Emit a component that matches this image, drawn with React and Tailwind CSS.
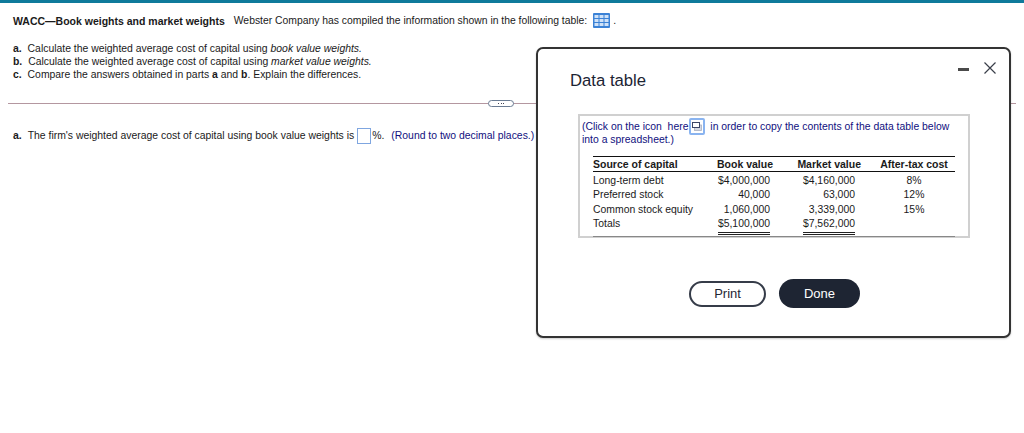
function GridIcon() {
  return (
    <svg width="17" height="15" viewBox="0 0 17 15" className="inline-block">
      <rect width="17" height="15" rx="1" fill="#3b82d6" />
      {[2, 6, 10].map((y) =>
        [1.5, 6.5, 11.5].map((x) => <rect key={x + "-" + y} x={x} y={y} width="4" height="3" fill="#cfe2f8" />)
      )}
    </svg>
  );
}

function CopyIcon() {
  return (
    <span className="inline-flex w-[16px] h-[17px] -my-[3px] border-2 border-[#8ab4f0] rounded-[2px] items-center justify-center align-middle bg-white">
      <svg width="10" height="9" viewBox="0 0 10 9">
        <rect x="2.5" y="3" width="7" height="5.5" fill="#d5d9e4" stroke="#a8aec0" strokeWidth="0.8" />
        <rect x="0.5" y="0.5" width="7" height="5" fill="white" stroke="#3c4668" strokeWidth="1" />
      </svg>
    </span>
  );
}

const rows = [
  ["Long-term debt", "$4,000,000", "$4,160,000", "8%"],
  ["Preferred stock", "40,000", "63,000", "12%"],
  ["Common stock equity", "1,060,000", "3,339,000", "15%"],
];

export default function App() {
  return (
    <div className="relative w-[1024px] h-[433px] bg-white overflow-hidden font-['Liberation_Sans',Arial,sans-serif] text-[10.42px] text-[#1a1a1a]">
      <div className="h-[3px] bg-[#0f7a9b]" />
      <div className="pl-[13px] pt-[7px] leading-[14px] flex items-center h-[22px] mt-[3px] text-[10.37px]">
        <b className="mr-[9px] text-[10.5px]">WACC—Book weights and market weights</b>
        <span>Webster Company has compiled the information shown in the following table:</span>
        <span className="ml-[6px] mr-[3px] flex"><GridIcon /></span>
        <span>.</span>
      </div>
      <div className="pl-[13px] mt-[14px] leading-[13px]">
        <div><b className="mr-[3px]">a.</b> Calculate the weighted average cost of capital using <i>book value weights.</i></div>
        <div><b className="mr-[3px]">b.</b> Calculate the weighted average cost of capital using <i>market value weights.</i></div>
        <div><b className="mr-[3px]">c.</b> Compare the answers obtained in parts <b>a</b> and <b>b</b>. Explain the differences.</div>
      </div>
      <div className="relative mx-[8px] mt-[22px] h-px bg-[#b497a0]">
        <div className="absolute left-[480px] top-[-3px] w-[26px] h-[7px] rounded-full border border-[#6b7c93] bg-white flex items-center justify-center gap-[1.5px]">
          <span className="w-px h-px bg-[#445]" />
          <span className="w-px h-px bg-[#445]" />
          <span className="w-px h-px bg-[#445]" />
        </div>
      </div>
      <div className="pl-[13px] mt-[24px] flex items-center h-[16px] whitespace-nowrap">
        <b className="mr-[6px]">a.</b>
        <span>The firm's weighted average cost of capital using book value weights is</span>
        <span className="ml-[3px] w-[14px] h-[16px] border border-[#7fa6e0] bg-white" />
        <span className="ml-px">%.</span>
        <span className="ml-[7px] text-[#10107e]">(Round to two decimal places.)</span>
      </div>

      <div className="absolute left-[536px] top-[47px] w-[475px] h-[291px] bg-white border-2 border-[#333] rounded-[7px] shadow-[0_1px_2px_rgba(0,0,0,0.2)]">
        <div className="absolute left-[420px] top-[13px] flex items-start gap-[15px]">
          <span className="w-[11px] h-[3px] bg-[#4a4a4a] mt-[6px]" />
          <svg width="12" height="12" viewBox="0 0 12 12" fill="none" stroke="#3a3f4a" strokeWidth="1.2">
            <path d="M0.5 0.5 L11.5 11.5 M11.5 0.5 L0.5 11.5" />
          </svg>
        </div>
        <div className="pl-[32px] pt-[22px] text-[16.7px] leading-[20px] text-[#1c2433]">Data table</div>
        <div className="ml-[40px] mt-[23px] w-[392px] h-[124px] border-2 border-[#d0d0d0] pl-[2px] pr-[13px] pt-[4px]">
          <div className="text-[#10107e] leading-[13px]">
            (Click on the icon&nbsp; here<span className="ml-[1px] mr-[2px] relative top-[-1px]"><CopyIcon /></span>&nbsp;in order to copy the contents of the data table below into a spreadsheet.)
          </div>
          <table className="ml-[11px] mt-[10px] w-[362px] table-fixed border-collapse leading-[14px] whitespace-nowrap">
            <thead>
              <tr className="border-t border-b border-[#111] h-[15px] text-[10.5px]">
                <th className="text-left font-bold p-0">Source of capital</th>
                <th className="text-right font-bold p-0 w-[80px]">Book value</th>
                <th className="text-right font-bold p-0 w-[88px]">Market value</th>
                <th className="text-center font-bold p-0 pl-[12px] w-[94px]">After-tax cost</th>
              </tr>
            </thead>
            <tbody>
              {rows.map((r, i) => (
                <tr key={r[0]} className={i === 0 ? "h-[16.5px] align-bottom" : "h-[14.5px]"}>
                  <td className="p-0">{r[0]}</td>
                  <td className="p-0 text-right pr-[3px]">{r[1]}</td>
                  <td className="p-0 text-right pr-[6px]">{r[2]}</td>
                  <td className="p-0 pl-[12px] text-center">{r[3]}</td>
                </tr>
              ))}
              <tr className="h-[19px] border-b border-[#888] align-top">
                <td className="p-0">Totals</td>
                <td className="p-0 pr-[3px]">
                  <span className="block w-fit ml-auto pb-[1px] border-b-[3px] border-double border-[#222]">$5,100,000</span>
                </td>
                <td className="p-0 pr-[6px]">
                  <span className="block w-fit ml-auto pb-[1px] border-b-[3px] border-double border-[#222]">$7,562,000</span>
                </td>
                <td className="p-0" />
              </tr>
            </tbody>
          </table>
        </div>
        <div className="mt-[41px] ml-[2px] flex justify-center items-center gap-[13px] text-[13px]">
          <div className="w-[77px] h-[26px] rounded-full border-2 border-[#363c49] flex items-center justify-center text-[#1f2633]">Print</div>
          <div className="w-[81px] h-[29px] rounded-full bg-[#1e2533] flex items-center justify-center text-white">Done</div>
        </div>
      </div>
    </div>
  );
}
